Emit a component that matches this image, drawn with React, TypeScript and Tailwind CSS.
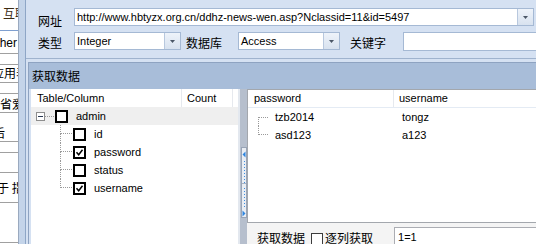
import React from "react";

const cjk = "font-['Noto_Sans_CJK_SC',sans-serif]";
const latin = "font-['Liberation_Sans','Noto_Sans_CJK_SC',sans-serif]";

const fields: [string, boolean][] = [
  ["id", false],
  ["password", true],
  ["status", false],
  ["username", true],
];

const rows = [
  ["tzb2014", "tongz"],
  ["asd123", "a123"],
];

function Arrow() {
  return (
    <svg width="5" height="3" viewBox="0 0 5 3">
      <path d="M0 0h5L2.5 3z" fill="#4b5767" />
    </svg>
  );
}

function DropButton() {
  return (
    <div className="flex w-[16px] shrink-0 items-center justify-center border-l border-[#b8c8de] bg-gradient-to-b from-[#eef3fa] to-[#d8e2ef]">
      <Arrow />
    </div>
  );
}

function Combo({ value, className }: { value: string; className: string }) {
  return (
    <div className={`flex h-[18px] shrink-0 border border-[#a5b9d4] bg-white ${className}`}>
      <span className={`flex-1 truncate pl-[2px] text-[11px] leading-[16px] ${latin}`}>{value}</span>
      <DropButton />
    </div>
  );
}

function BoldCheck({ checked }: { checked?: boolean }) {
  return (
    <span className="flex h-[13px] w-[13px] shrink-0 items-center justify-center border-2 border-black bg-white">
      {checked && (
        <svg width="9" height="9" viewBox="0 0 9 9">
          <path d="M1.5 4.2l2.2 2.6 3.8-5" fill="none" stroke="#000" strokeWidth="1.5" />
        </svg>
      )}
    </span>
  );
}

function Behind() {
  // the window behind, cut off at the left edge
  return (
    <div className={`flex w-[18px] shrink-0 flex-col overflow-hidden bg-white text-[12px] leading-[12px] whitespace-nowrap ${cjk}`}>
      <div className="h-[31px] shrink-0 border-b border-[#7f9fcf] pl-[3px] pt-[7px] text-[#3a2a12]">互联网</div>
      <div className={`h-[23px] shrink-0 border-b border-[#a0a0a0] pt-[6px] text-[12px] ${latin}`}>
        <span className="-ml-[13px]">Other</span>
      </div>
      <div className="h-[11px] shrink-0 border-b border-[#a0a0a0]" />
      <div className="h-[18px] shrink-0 border-b border-[#a0a0a0] pt-[2px]">
        <span className="-ml-[8px]">应用表</span>
      </div>
      <div className="h-[11px] shrink-0 border-b border-[#a0a0a0]" />
      <div className="h-[19px] shrink-0 border-b border-[#a0a0a0] pt-[4px]">省爱</div>
      <div className="h-[29px] shrink-0 border-b border-[#a0a0a0] pt-[14px]">
        <span className="-ml-[7px]">后</span>
      </div>
      <div className="h-[11px] shrink-0 border-b border-[#a0a0a0]" />
      <div className="h-[20px] shrink-0 border-b border-[#a0a0a0]" />
      <div className="h-[30px] shrink-0 border-b border-[#a0a0a0] pt-[9px]">
        <span className="-ml-[15px]">关于 指</span>
      </div>
      <div className="h-[40px] shrink-0 border-b border-[#a0a0a0]" />
    </div>
  );
}

function TopPanel() {
  return (
    <div className={`flex h-[59px] shrink-0 flex-col gap-[6px] overflow-hidden border-b border-[#9fb3ce] pl-[12px] pt-[8px] text-[12px] ${cjk}`}>
      <div className="flex h-[18px] items-start">
        <span className="w-[36px] shrink-0 pt-[7px] leading-[12px]">网址</span>
        <Combo className="w-[460px]" value="http://www.hbtyzx.org.cn/ddhz-news-wen.asp?Nclassid=11&id=5497" />
      </div>
      <div className="flex h-[18px] items-start">
        <span className="w-[36px] shrink-0 pt-[5px] leading-[12px]">类型</span>
        <Combo className="w-[107px]" value="Integer" />
        <span className="ml-[5px] w-[36px] shrink-0 pt-[5px] leading-[12px]">数据库</span>
        <Combo className="ml-[16px] w-[102px]" value="Access" />
        <span className="ml-[10px] w-[36px] shrink-0 pt-[5px] leading-[12px]">关键字</span>
        <div className="ml-[17px] h-[19px] w-[160px] shrink-0 border border-[#a5b9d4] bg-white" />
      </div>
    </div>
  );
}

function Tree() {
  return (
    <div className={`flex w-[207px] shrink-0 flex-col bg-white text-[11px] leading-[18px] ${latin}`}>
      <div className="flex h-[18px] shrink-0">
        <span className="w-[151px] border-r border-[#e6e9ee] pl-[6px]">Table/Column</span>
        <span className="w-[51px] border-r border-[#e6e9ee] pl-[5px]">Count</span>
      </div>
      <div className="flex h-[18px] shrink-0 items-center bg-[#efefef] pl-[5px]">
        <span className="flex h-[9px] w-[9px] shrink-0 items-center justify-center border border-[#8e8e8e] bg-white">
          <span className="h-px w-[5px] bg-[#2b3a55]" />
        </span>
        <span className="w-[9px] shrink-0 border-t border-dotted border-[#9a9a9a]" />
        <span className="ml-[1px]">
          <BoldCheck />
        </span>
        <span className="ml-[8px]">admin</span>
      </div>
      {fields.map(([name, checked], i) => (
        <div key={name} className="flex h-[18px] shrink-0 items-center pl-[29px]">
          <span className="flex h-[18px] w-[12px] shrink-0 flex-col">
            <span className="h-[9px] border-b border-l border-dotted border-[#9a9a9a]" />
            {i < fields.length - 1 && <span className="h-[9px] border-l border-dotted border-[#9a9a9a]" />}
          </span>
          <span className="ml-[1px]">
            <BoldCheck checked={checked} />
          </span>
          <span className="ml-[8px]">{name}</span>
        </div>
      ))}
    </div>
  );
}

function Splitter() {
  const dots1 = Array.from({ length: 8 }, (_, i) => 13 + i * 3);
  const dots2 = Array.from({ length: 7 }, (_, i) => 40 + i * 3);
  return (
    <div className="flex w-[9px] shrink-0 flex-col border-l-2 border-[#e3e8ef] bg-[#b6bfcd]">
      <div className="h-[58px] shrink-0" />
      <div className="ml-[1px] h-[71px] w-[6px] shrink-0 border border-[#98a4b6] bg-[#e9edf3]">
        <svg width="4" height="69" viewBox="0 0 4 69">
          <path d="M0.5 6.5L3.5 3.5V9.5z" fill="#2f86e0" />
          {dots1.map((y) => (
            <rect key={y} x="2" y={y} width="1" height="1" fill="#3b8de0" />
          ))}
          <rect x="0" y="35" width="4" height="1" fill="#a8b2c2" />
          {dots2.map((y) => (
            <rect key={y} x="2" y={y} width="1" height="1" fill="#3b8de0" />
          ))}
          <path d="M3.5 65.5L0.5 62.5V68.5z" fill="#2f86e0" />
        </svg>
      </div>
    </div>
  );
}

function ResultList() {
  return (
    <div className="flex min-w-0 flex-1 flex-col">
      <div className={`flex h-[134px] shrink-0 flex-col border-b border-l border-t border-[#a3a7ad] bg-white text-[11px] leading-[18px] ${latin}`}>
        <div className="flex h-[18px] shrink-0 border-b border-[#e4ebf4]">
          <span className="w-[146px] shrink-0 border-r border-[#e6e9ee] pl-[6px] leading-[17px]">password</span>
          <span className="pl-[5px] leading-[17px]">username</span>
        </div>
        {rows.map(([pw, user], i) => (
          <div key={pw} className="flex h-[18px] shrink-0">
            <span className="flex w-[146px] shrink-0 items-center pl-[10px]">
              <span className="flex h-[18px] w-[10px] shrink-0 flex-col">
                {i === 0 ? (
                  <>
                    <span className="h-[9px]" />
                    <span className="h-[9px] border-l border-t border-dotted border-[#9a9a9a]" />
                  </>
                ) : (
                  <span className="h-[9px] border-b border-l border-dotted border-[#9a9a9a]" />
                )}
              </span>
              <span className="ml-[7px]">{pw}</span>
            </span>
            <span className="pl-[8px]">{user}</span>
          </div>
        ))}
      </div>
      <div className={`flex min-h-0 flex-1 items-start overflow-hidden bg-[#f4f4f4] pl-[10px] text-[12px] leading-[12px] ${cjk}`}>
        <span className="mt-[9px] shrink-0">获取数据</span>
        <span className="ml-[6px] mt-[10px] h-[12px] w-[12px] shrink-0 border border-[#3c3c3c] bg-white" />
        <span className="ml-[2px] mt-[9px] shrink-0">逐列获取</span>
        <div className={`ml-[21px] mt-[4px] h-[20px] w-[160px] shrink-0 border border-[#abadb3] bg-white pl-[3px] text-[11px] leading-[18px] ${latin}`}>
          1=1
        </div>
      </div>
    </div>
  );
}

export default function App() {
  return (
    <div className="flex h-[244px] w-[536px] overflow-hidden bg-white text-black">
      <Behind />
      <div className="w-[8px] shrink-0 border-l border-r border-l-[#9aa9bf] border-r-[#8ea6c6] bg-[#c4d4e9]" />
      <div className="flex min-w-0 flex-1 flex-col bg-[#d5e1f2]">
        <TopPanel />
        <div className="ml-[2px] mt-[3px] flex min-h-0 flex-1 flex-col border-l border-t border-[#8ea3c1]">
          <div className={`flex h-[26px] shrink-0 items-center bg-[#a8bdd9] pl-[3px] text-[12px] ${cjk}`}>获取数据</div>
          <div className="flex min-h-0 flex-1 bg-[#d5e1f2] pl-[2px]">
            <Tree />
            <Splitter />
            <ResultList />
          </div>
        </div>
      </div>
    </div>
  );
}
